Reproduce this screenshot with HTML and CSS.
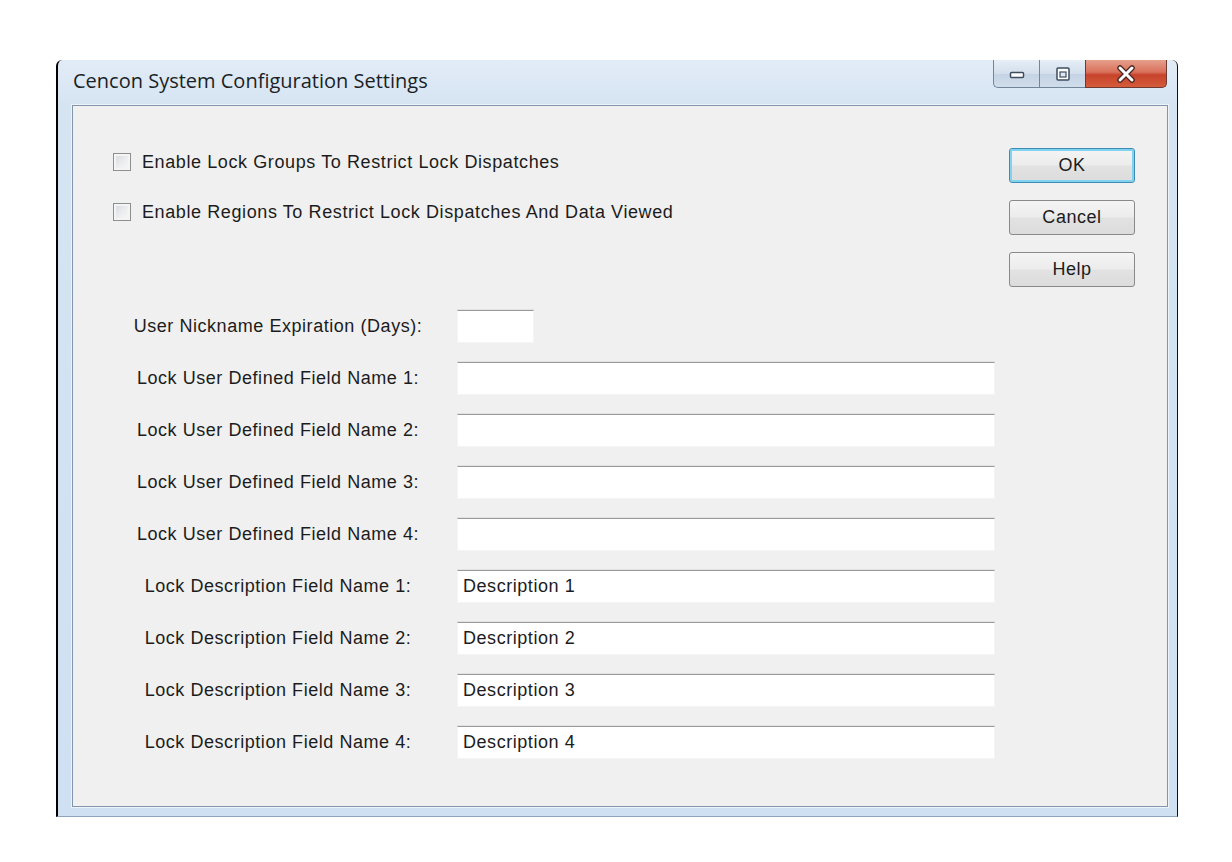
FILE: index.html
```html
<!DOCTYPE html>
<html lang="en">
<head>
    <meta charset="UTF-8">
    <meta name="viewport" content="width=device-width, initial-scale=1.0">
    <title>Cencon System Configuration Settings</title>
    <link rel="stylesheet" href="styles.css">
</head>
<body>
    <div class="window">
        <div class="title-bar">
            <span class="title">Cencon System Configuration Settings</span>
            <div class="caption-buttons">
                <button class="caption-btn minimize" title="Minimize">
                    <svg width="18" height="10" viewBox="0 0 18 10">
                        <rect x="2.5" y="3.5" width="13" height="5" rx="1" fill="#fff" stroke="#3d4c5f" stroke-width="1.5"></rect>
                    </svg>
                </button>
                <button class="caption-btn restore" title="Maximize">
                    <svg width="16" height="16" viewBox="0 0 16 16">
                        <rect x="2" y="2" width="12" height="12" rx="1" fill="#fff" stroke="#3d4c5f" stroke-width="1.5"></rect>
                        <rect x="5" y="6" width="6" height="5" fill="#dfe8f2" stroke="#3d4c5f" stroke-width="1.2"></rect>
                    </svg>
                </button>
                <button class="caption-btn close" title="Close">
                    <svg width="20" height="18" viewBox="0 0 20 18">
                        <path d="M4 3 L16 15 M16 3 L4 15" stroke="#4a2620" stroke-width="5.5" stroke-linecap="round"></path>
                        <path d="M4 3 L16 15 M16 3 L4 15" stroke="#ffffff" stroke-width="3" stroke-linecap="round"></path>
                    </svg>
                </button>
            </div>
        </div>

        <div class="client">
            <div class="main">
                <div class="check-row">
                    <span class="checkbox"></span>
                    <span>Enable Lock Groups To Restrict Lock Dispatches</span>
                </div>
                <div class="check-row">
                    <span class="checkbox"></span>
                    <span>Enable Regions To Restrict Lock Dispatches And Data Viewed</span>
                </div>

                <div class="fields">
                    <span class="field-label">User Nickname Expiration (Days):</span>
                    <div><input type="text" class="field field-short" value=""></div>

                    <span class="field-label">Lock User Defined Field Name 1:</span>
                    <input type="text" class="field" value="">

                    <span class="field-label">Lock User Defined Field Name 2:</span>
                    <input type="text" class="field" value="">

                    <span class="field-label">Lock User Defined Field Name 3:</span>
                    <input type="text" class="field" value="">

                    <span class="field-label">Lock User Defined Field Name 4:</span>
                    <input type="text" class="field" value="">

                    <span class="field-label">Lock Description Field Name 1:</span>
                    <input type="text" class="field" value="Description 1">

                    <span class="field-label">Lock Description Field Name 2:</span>
                    <input type="text" class="field" value="Description 2">

                    <span class="field-label">Lock Description Field Name 3:</span>
                    <input type="text" class="field" value="Description 3">

                    <span class="field-label">Lock Description Field Name 4:</span>
                    <input type="text" class="field" value="Description 4">
                </div>
            </div>

            <div class="actions">
                <button class="btn btn-default">OK</button>
                <button class="btn">Cancel</button>
                <button class="btn">Help</button>
            </div>
        </div>
    </div>
</body>
</html>
```

FILE: styles.css
```css
body {
    margin: 0;
    padding: 0;
    background-color: #fff;
    font-family: "Liberation Sans", Arial, sans-serif;
}

/* window frame */
.window {
    box-sizing: border-box;
    width: 1122px;
    height: 757px;
    margin: 60px 0 0 56px;
    padding: 0 9px 9px 14px;
    display: flex;
    flex-direction: column;
    border-left: 2px solid #000;
    border-right: 1px solid #111;
    border-bottom: 1px solid #8ea4bc;
    border-radius: 6px 6px 0 0;
    background: linear-gradient(to bottom, #e2ecf7 0, #d6e4f2 45px, #cfe0f2 100%);
}

.title-bar {
    height: 45px;
    display: flex;
    align-items: flex-start;
    flex-shrink: 0;
}

.title {
    font-family: "Open Sans", "Noto Sans", sans-serif;
    font-size: 20px;
    color: #1b1f26;
    padding: 7px 0 0 1px;
}

.caption-buttons {
    margin-left: auto;
    margin-right: 1px;
    display: flex;
    height: 28px;
}

.caption-btn {
    height: 28px;
    width: 46px;
    padding: 0;
    margin: 0;
    display: flex;
    align-items: center;
    justify-content: center;
    border: 1px solid #72859b;
    border-top: none;
    border-right: none;
    background: linear-gradient(to bottom, #e6eef7 0%, #d3dfec 50%, #c4d3e4 51%, #cfdcea 100%);
}

.caption-btn.minimize {
    border-bottom-left-radius: 5px;
}

.caption-btn.close {
    width: 82px;
    border-right: 1px solid #72859b;
    border-color: #6f3a30;
    border-bottom-right-radius: 5px;
    background: linear-gradient(to bottom, #e6a08c 0%, #d8705a 45%, #c7432b 55%, #d45c3c 100%);
}

/* client area */
.client {
    flex: 1;
    display: flex;
    padding: 0 32px 0 40px;
    border: 1px solid #8196ad;
    background-color: #f0f0f0;
    box-shadow: 0 0 0 1px #edf3fa;
}

.main {
    flex: 1;
    padding-top: 31px;
}

.check-row {
    display: flex;
    align-items: center;
    height: 50px;
    gap: 11px;
    font-size: 18px;
    letter-spacing: 0.6px;
    color: #1c1c1c;
}

.checkbox {
    box-sizing: border-box;
    width: 18px;
    height: 18px;
    border: 1px solid #8e8f8f;
    background: linear-gradient(135deg, #d6d9dd 0%, #eceef0 55%, #f8f8f8 100%);
    box-shadow: inset 0 0 0 2px #f4f4f4;
}

.fields {
    margin-top: 73px;
    display: grid;
    grid-template-columns: 330px 538px;
    grid-auto-rows: 33px;
    column-gap: 14px;
    row-gap: 19px;
    align-items: center;
}

.field-label {
    text-align: center;
    font-size: 18px;
    letter-spacing: 0.55px;
    color: #1c1c1c;
}

.field {
    box-sizing: border-box;
    width: 100%;
    height: 33px;
    margin: 0;
    padding: 0 5px;
    display: block;
    border: 1px solid #f4f4f4;
    border-top: 1px solid #9a9a9a;
    background-color: #fff;
    box-shadow: 0 -1px 0 #e2e2e2;
    font-family: "Liberation Sans", Arial, sans-serif;
    font-size: 18px;
    letter-spacing: 0.55px;
    color: #1c1c1c;
    outline: none;
}

.field-short {
    width: 77px;
}

/* buttons on the right */
.actions {
    width: 126px;
    margin-left: 14px;
    padding-top: 42px;
    display: flex;
    flex-direction: column;
    gap: 17px;
}

.btn {
    height: 35px;
    border: 1px solid #8a8a8a;
    border-radius: 3px;
    background: linear-gradient(to bottom, #f4f4f4 0%, #ececec 48%, #e2e2e2 52%, #dcdcdc 100%);
    font-family: "Liberation Sans", Arial, sans-serif;
    font-size: 18px;
    letter-spacing: 0.55px;
    color: #1c1c1c;
    padding: 0;
}

.btn-default {
    border: 1px solid #3e8cb5;
    box-shadow: inset 0 0 0 2px #7fd3ef;
}
```
